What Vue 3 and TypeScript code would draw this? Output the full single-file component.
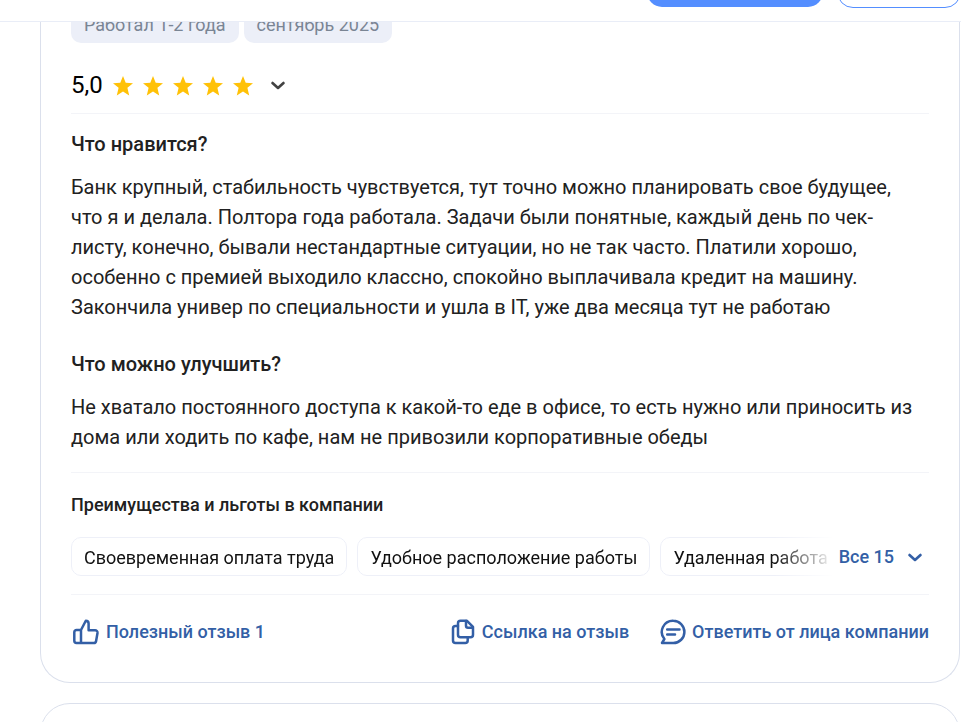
<script setup lang="ts">
const tags: string[] = ['Работал 1-2 года', 'сентябрь 2025']
const benefits: string[] = [
  'Своевременная оплата труда',
  'Удобное расположение работы',
  'Удаленная работа',
]
</script>

<template>
  <div class="page">
    <header class="topbar">
      <button class="top-btn primary" type="button" aria-label="Оставить отзыв"></button>
      <button class="top-btn outline" type="button" aria-label="Войти"></button>
    </header>

    <main class="feed">
      <article class="card review">
        <ul class="tags">
          <li v-for="tag in tags" :key="tag" class="tag">{{ tag }}</li>
        </ul>

        <div class="rating">
          <span class="score">5,0</span>
          <span class="stars">
            <svg v-for="n in 5" :key="n" width="20" height="22" viewBox="0 0 20 22" aria-hidden="true">
              <path d="M10 2 12.700 8.700 20 9.200 14.400 13.800 16.200 21.500 10 17.400 3.800 21.500 5.600 13.800 0 9.200 7.300 8.700Z" fill="#ffc107" />
            </svg>
          </span>
          <button class="icon-btn" type="button" aria-label="Показать оценки">
            <svg width="16" height="16" viewBox="0 0 16 16" aria-hidden="true">
              <path d="M2.500 6 8 11l5.500-5" fill="none" stroke="currentColor" stroke-width="2.600" stroke-linecap="round" stroke-linejoin="round" />
            </svg>
          </button>
        </div>

        <div class="texts">
          <section>
            <h2>Что нравится?</h2>
            <p>
              Банк крупный, стабильность чувствуется, тут точно можно планировать свое будущее, что я и
              делала. Полтора года работала. Задачи были понятные, каждый день по чек-листу, конечно,
              бывали нестандартные ситуации, но не так часто. Платили хорошо, особенно с премией
              выходило классно, спокойно выплачивала кредит на машину. Закончила универ по
              специальности и ушла в IT, уже два месяца тут не работаю
            </p>
          </section>
          <section>
            <h2>Что можно улучшить?</h2>
            <p>
              Не хватало постоянного доступа к какой-то еде в офисе, то есть нужно или приносить из дома
              или ходить по кафе, нам не привозили корпоративные обеды
            </p>
          </section>
        </div>

        <section class="benefits">
          <h3>Преимущества и льготы в компании</h3>
          <div class="benefit-row">
            <ul class="chips">
              <li v-for="item in benefits" :key="item" class="chip">{{ item }}</li>
            </ul>
            <button class="all" type="button">
              Все 15
              <svg width="16" height="16" viewBox="0 0 16 16" aria-hidden="true">
                <path d="M2.500 6 8 11l5.500-5" fill="none" stroke="currentColor" stroke-width="2.600" stroke-linecap="round" stroke-linejoin="round" />
              </svg>
            </button>
          </div>
        </section>

        <footer class="actions">
          <button class="action like" type="button">
            <svg width="30" height="28" viewBox="0 0 30 28" aria-hidden="true">
              <g fill="none" stroke="currentColor" stroke-width="2.500" stroke-linejoin="round" stroke-linecap="round">
                <path d="M10 12H5.500a2.200 2.200 0 0 0-2.200 2.200v8.600A2.200 2.200 0 0 0 5.500 25H22.800a2.300 2.300 0 0 0 2.300-2l1.400-8a2.500 2.500 0 0 0-2.500-2.800H17.600V5.500A2.800 2.800 0 0 0 14.800 2.700L10 12V25" />
              </g>
            </svg>
            Полезный отзыв 1
          </button>
          <button class="action" type="button">
            <svg width="28" height="28" viewBox="0 0 28 28" aria-hidden="true">
              <g fill="none" stroke="currentColor" stroke-width="2.500" stroke-linejoin="round" stroke-linecap="round">
                <path d="M18 2.800H11.500A2.500 2.500 0 0 0 9 5.300v11.400a2.500 2.500 0 0 0 2.500 2.500h10a2.500 2.500 0 0 0 2.500-2.500V8.800Z" />
                <path d="M17 3v4.800a2 2 0 0 0 2 2h4.800" />
                <path d="M9 8H6.500A2.500 2.500 0 0 0 4 10.500v12A2.500 2.500 0 0 0 6.500 25h9.700a2.500 2.500 0 0 0 2.500-2.500v-3" />
              </g>
            </svg>
            Ссылка на отзыв
          </button>
          <button class="action" type="button">
            <svg width="28" height="28" viewBox="0 0 28 28" aria-hidden="true">
              <g fill="none" stroke="currentColor" stroke-width="2.500" stroke-linejoin="round" stroke-linecap="round">
                <path d="M14.300 2.800a11.100 11.100 0 0 1 0 22.200H3l2.400-4A11.100 11.100 0 0 1 14.300 2.800Z" />
                <path d="M8.200 11.500h12.300M8.200 16.500h7.800" />
              </g>
            </svg>
            Ответить от лица компании
          </button>
        </footer>
      </article>

      <article class="card next"></article>
    </main>
  </div>
</template>

<style>
body {
  background: #fff;
  overflow: hidden;
}
</style>

<style scoped>
.page {
  height: 100vh;
  overflow: hidden;
  padding-right: 18px;
  box-sizing: border-box;
  font-family: Roboto, "Liberation Sans", sans-serif;
  color: #212121;
}
.topbar {
  position: fixed;
  top: 0;
  left: 0;
  right: 18px;
  height: 22px;
  box-sizing: border-box;
  display: flex;
  justify-content: flex-end;
  align-items: flex-end;
  gap: 13px;
  padding-bottom: 13px;
  background: #fff;
  border-bottom: 1px solid #e9edf7;
}
.top-btn {
  flex: none;
  height: 40px;
  border: 1px solid #548eff;
  border-radius: 16px;
  padding: 0;
}
.primary {
  width: 178px;
  border-color: transparent;
  background: #548eff;
  background-clip: padding-box;
}
.outline {
  width: 124px;
  background: #fff;
}
.feed {
  padding: 0 1px 0 40px;
}
.card {
  box-sizing: border-box;
  border: 1px solid #dbe0ec;
  border-radius: 30px;
  padding: 0 30px;
}
.review {
  border-top: 0;
  border-top-left-radius: 0;
  border-top-right-radius: 0;
  padding-top: 7px;
  padding-bottom: 36px;
}
.next {
  margin-top: 20px;
  height: 120px;
}
ul {
  list-style: none;
  margin: 0;
  padding: 0;
}
button {
  font-family: inherit;
  cursor: pointer;
}
svg {
  display: block;
  flex: none;
}
.tags {
  display: flex;
  gap: 5px;
}
.tag {
  height: 36px;
  line-height: 36px;
  padding: 0 13px;
  border-radius: 10px;
  background: #eceff8;
  color: #7a8594;
  font-size: 18px;
}
.rating {
  display: flex;
  align-items: center;
  height: 30px;
  padding: 27px 0 13px;
  border-bottom: 1px solid #f3f4f8;
}
.score {
  font-size: 24px;
  line-height: 30px;
  color: #000;
}
.stars {
  display: flex;
  gap: 10px;
  margin-left: 10px;
}
.icon-btn {
  border: 0;
  background: none;
  padding: 0;
  margin-left: 17px;
  color: #424242;
}
.texts {
  display: flex;
  flex-direction: column;
  gap: 27px;
  padding: 15px 0 20px;
  border-bottom: 1px solid #f3f4f8;
}
h2 {
  margin: 0 0 13px;
  font-size: 20px;
  line-height: 30px;
  font-weight: 500;
}
p {
  margin: 0;
  padding-right: 10px;
  font-size: 20px;
  line-height: 30px;
}
.benefits {
  padding: 20px 0 18px;
  border-bottom: 1px solid #f3f4f8;
}
h3 {
  margin: 0 0 20px;
  font-size: 18px;
  line-height: 24px;
  font-weight: 500;
}
.benefit-row {
  display: flex;
  align-items: center;
}
.chips {
  flex: 1;
  min-width: 0;
  display: flex;
  gap: 10px;
  overflow: hidden;
  -webkit-mask-image: linear-gradient(to left, transparent, #000 60px);
  mask-image: linear-gradient(to left, transparent, #000 60px);
}
.chip {
  flex: none;
  box-sizing: border-box;
  height: 39px;
  line-height: 39px;
  padding: 0 12px;
  border: 1px solid #eef0f8;
  border-radius: 10px;
  font-size: 18px;
  color: #111;
}
.all {
  display: flex;
  align-items: center;
  gap: 13px;
  border: 0;
  background: none;
  padding: 0 6px 0 5px;
  font-size: 18px;
  line-height: 24px;
  font-weight: 500;
  color: #335fa6;
}
.actions {
  display: flex;
  align-items: center;
  gap: 30px;
  padding-top: 23px;
}
.action {
  display: flex;
  align-items: center;
  gap: 5px;
  border: 0;
  background: none;
  padding: 0;
  font-size: 18px;
  line-height: 28px;
  font-weight: 500;
  color: #335fa6;
  white-space: nowrap;
}
.like {
  margin-right: auto;
}
</style>
